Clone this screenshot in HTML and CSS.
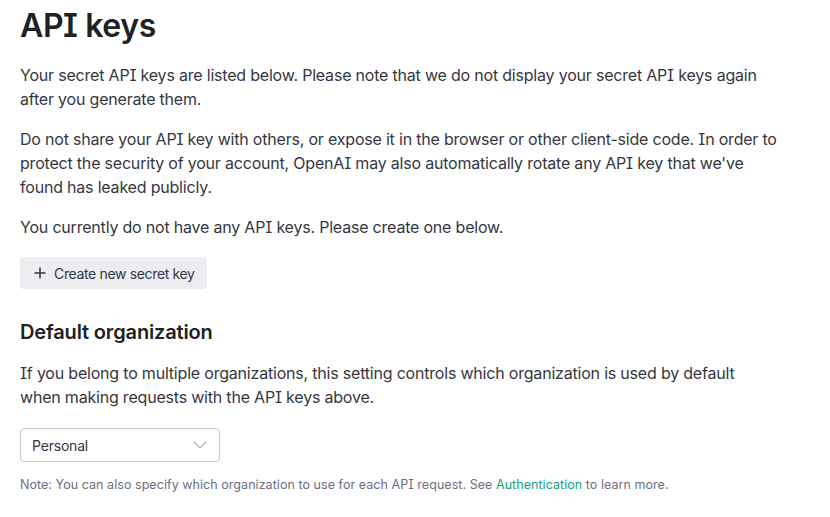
FILE: index.html
```html
<!DOCTYPE html>
<html>
<head>
<meta charset="utf-8">
<link rel="stylesheet" href="styles.css">
</head>
<body>
<main class="page">
  <h1 class="title">API keys</h1>
  <p class="text">Your secret API keys are listed below. Please note that we do not display your secret API keys again<br>after you generate them.</p>
  <p class="text">Do not share your API key with others, or expose it in the browser or other client-side code. In order to<br>protect the security of your account, OpenAI may also automatically rotate any API key that we've<br>found has leaked publicly.</p>
  <p class="text">You currently do not have any API keys. Please create one below.</p>
  <button class="btn">
    <svg class="btn-icon" width="12" height="12" viewBox="0 0 12 12"><path d="M6 1v10M1 6h10" stroke="#353740" stroke-width="1.5" stroke-linecap="round"/></svg>
    <span>Create new secret key</span>
  </button>
  <h2 class="subtitle">Default organization</h2>
  <p class="text">If you belong to multiple organizations, this setting controls which organization is used by default<br>when making requests with the API keys above.</p>
  <div class="select">
    <span>Personal</span>
    <svg class="chev" width="14" height="8" viewBox="0 0 14 8"><path d="M1 1l6 6 6-6" fill="none" stroke="#acacbe" stroke-width="1.2"/></svg>
  </div>
  <p class="note">Note: You can also specify which organization to use for each API request. See <a class="link" href="#">Authentication</a> to learn more.</p>
</main>
</body>
</html>
```
FILE: styles.css
```css
* { box-sizing: border-box; }
html, body { margin: 0; background: #fff; }
body {
  font-family: Inter, "Noto Sans", sans-serif;
  font-feature-settings: "cv08";
  color: #353740;
}
.page {
  padding: 6px 0 0 20px;
  width: 830px;
}
.title {
  margin: 0 0 17px;
  font-size: 32px;
  line-height: 40px;
  font-weight: 600;
  color: #202123;
  letter-spacing: -0.4px;
}
.text {
  margin: 0 0 16px;
  font-size: 16px;
  line-height: 24px;
  letter-spacing: -0.2px;
}
.btn {
  display: flex;
  align-items: center;
  gap: 8px;
  height: 32px;
  padding: 0 12px 0 14px;
  margin-top: 18px;
  border: none;
  border-radius: 4px;
  background: #ececf1;
  font-family: inherit;
  font-feature-settings: "cv08";
  font-size: 14px;
  letter-spacing: -0.35px;
  color: #353740;
}
.subtitle {
  margin: 29px 0 15px;
  font-size: 20px;
  line-height: 28px;
  font-weight: 600;
  color: #202123;
  letter-spacing: -0.15px;
}
.select {
  display: flex;
  align-items: center;
  justify-content: space-between;
  width: 200px;
  height: 34px;
  margin-top: 19px;
  padding: 0 12px 0 11px;
  border: 1px solid #c5c5d2;
  border-radius: 4px;
  font-size: 14px;
  letter-spacing: -0.2px;
  color: #353740;
}
.note {
  margin: 14px 0 0;
  font-size: 12.5px;
  line-height: 18px;
  letter-spacing: 0.05px;
  color: #6e6e80;
}
.link {
  color: #10a37f;
  text-decoration: none;
}
```
